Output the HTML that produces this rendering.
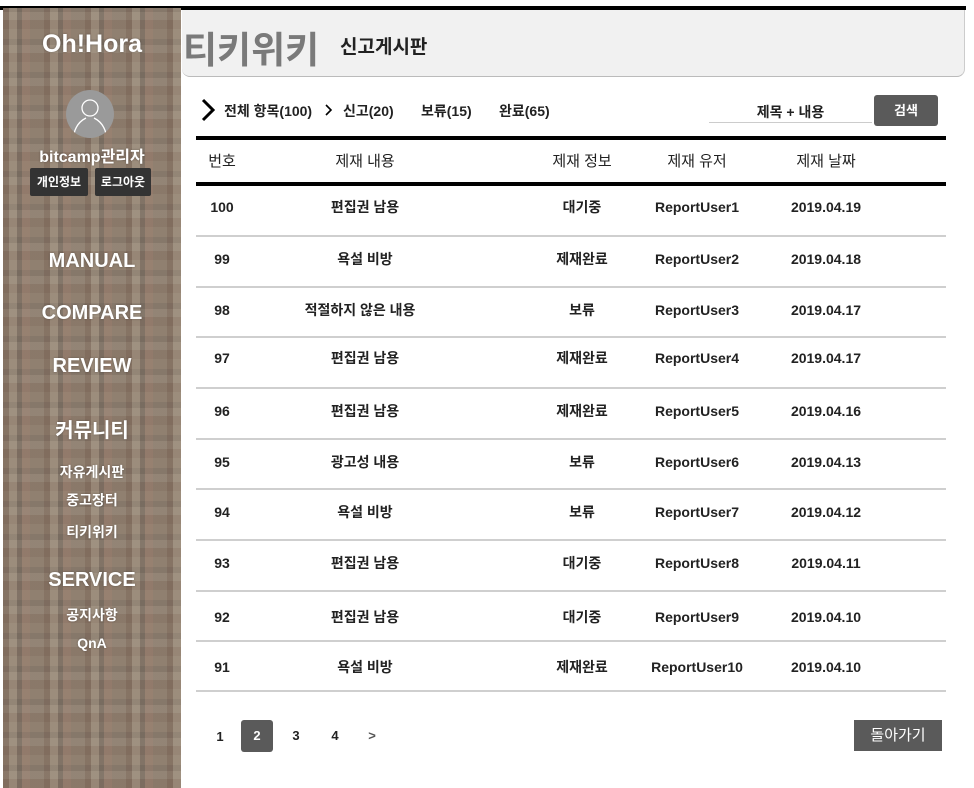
<!DOCTYPE html>
<html><head><meta charset="utf-8"><style>
*{margin:0;padding:0;box-sizing:border-box}
body{width:974px;height:788px;background:#fff;position:relative;overflow:hidden;font-family:"Liberation Sans","Noto Sans CJK KR",sans-serif;color:#222}
.a{position:absolute;white-space:nowrap}
#side{position:absolute;left:3px;top:8px;width:178px;height:780px;
background:
repeating-linear-gradient(90deg,rgba(90,60,45,.22) 0 6px,rgba(200,185,160,.18) 6px 14px,rgba(60,50,45,.2) 14px 19px,rgba(170,120,100,.18) 19px 27px,rgba(120,100,80,.1) 27px 41px),
repeating-linear-gradient(0deg,rgba(120,80,60,.12) 0 9px,rgba(210,200,180,.1) 9px 17px,rgba(70,60,55,.1) 17px 23px,rgba(180,150,120,.1) 23px 33px),
#8f8173;}
#side .t{position:absolute;width:178px;text-align:center;color:#fff;font-weight:bold;text-shadow:0 0 2px rgba(0,0,0,.3)}
.btn{position:absolute;background:#333;color:#fff;font-size:12px;font-weight:bold;text-align:center;line-height:28px;height:28px;border-radius:2px}
.r{position:absolute;font-size:14px;font-weight:bold;text-align:center;line-height:20px;color:#222}
.hl{position:absolute;left:196px;width:750px;height:2px;background:#cfcfcf}
</style></head><body>
<div class="a" style="left:0;top:6px;width:966px;height:4px;background:#000"></div>
<div id="side">
 <div class="t" style="top:22px;font-size:25px">Oh!Hora</div>
 <div style="position:absolute;left:63px;top:82px;width:48px;height:48px;border-radius:50%;background:#9a9a9a;overflow:hidden">
  <svg width="48" height="48" viewBox="0 0 48 48"><circle cx="24" cy="18" r="8" fill="none" stroke="#fff" stroke-width="1.3"/><path d="M8 44 C10 34 16 30 20 28 M40 44 C38 34 32 30 28 28" fill="none" stroke="#fff" stroke-width="1.3"/></svg>
 </div>
 <div class="t" style="top:135px;font-size:16px">bitcamp관리자</div>
 <div class="btn" style="left:27px;top:160px;width:58px">개인정보</div>
 <div class="btn" style="left:92px;top:160px;width:56px">로그아웃</div>
 <div class="t" style="top:242px;font-size:20px">MANUAL</div>
 <div class="t" style="top:294px;font-size:20px">COMPARE</div>
 <div class="t" style="top:347px;font-size:20px">REVIEW</div>
 <div class="t" style="top:406px;font-size:20px">커뮤니티</div>
 <div class="t" style="top:454px;font-size:14px">자유게시판</div>
 <div class="t" style="top:482px;font-size:14px">중고장터</div>
 <div class="t" style="top:514px;font-size:14px">티키위키</div>
 <div class="t" style="top:561px;font-size:20px">SERVICE</div>
 <div class="t" style="top:597px;font-size:14px">공지사항</div>
 <div class="t" style="top:627px;font-size:14px">QnA</div>
</div>
<div class="a" style="left:182px;top:10px;width:783px;height:67px;background:#f1f1f1;border-bottom:1px solid #bbb;border-right:1px solid #ccc;border-radius:0 0 8px 8px"></div>
<div class="a" style="left:183px;top:20px;font-size:37px;font-weight:bold;color:#7a7a7a">티키위키</div>
<div class="a" style="left:340px;top:32px;font-size:19px;font-weight:bold;color:#222">신고게시판</div>
<svg class="a" style="left:200px;top:98px" width="16" height="24" viewBox="0 0 16 24"><path d="M3 2 L13 12 L3 22" fill="none" stroke="#000" stroke-width="3"/></svg>
<div class="a" style="left:224px;top:101px;font-size:14px;font-weight:bold">전체 항목(100)</div>
<svg class="a" style="left:325px;top:104px" width="8" height="12" viewBox="0 0 8 12"><path d="M1 1 L6 6 L1 11" fill="none" stroke="#000" stroke-width="1.6"/></svg>
<div class="a" style="left:343px;top:101px;font-size:14px;font-weight:bold">신고(20)</div>
<div class="a" style="left:421px;top:101px;font-size:14px;font-weight:bold">보류(15)</div>
<div class="a" style="left:499px;top:101px;font-size:14px;font-weight:bold">완료(65)</div>
<div class="a" style="left:709px;top:102px;width:163px;text-align:center;font-size:14px;font-weight:bold">제목 + 내용</div>
<div class="a" style="left:709px;top:122px;width:163px;height:1px;background:#ccc"></div>
<div class="a" style="left:874px;top:95px;width:64px;height:31px;background:#5a5a5a;border-radius:3px;color:#fff;font-size:13px;font-weight:bold;text-align:center;line-height:31px">검색</div>
<div class="a" style="left:196px;top:136px;width:750px;height:4px;background:#000"></div>
<div class="a" style="left:196px;top:182px;width:750px;height:4px;background:#000"></div>
<div class="r" style="left:192px;width:60px;top:152px;font-weight:normal;font-size:15px">번호</div>
<div class="r" style="left:300px;width:130px;top:152px;font-weight:normal;font-size:15px">제재 내용</div>
<div class="r" style="left:532px;width:100px;top:152px;font-weight:normal;font-size:15px">제재 정보</div>
<div class="r" style="left:647px;width:100px;top:152px;font-weight:normal;font-size:15px">제재 유저</div>
<div class="r" style="left:776px;width:100px;top:152px;font-weight:normal;font-size:15px">제재 날짜</div>

<div class="hl" style="top:235px"></div><div class="hl" style="top:286px"></div><div class="hl" style="top:336px"></div><div class="hl" style="top:387px"></div><div class="hl" style="top:438px"></div><div class="hl" style="top:488px"></div><div class="hl" style="top:539px"></div><div class="hl" style="top:590px"></div><div class="hl" style="top:640px"></div><div class="hl" style="top:690px"></div>

<div class="r" style="left:192px;width:60px;top:197px">100</div><div class="r" style="left:295px;width:140px;top:197px">편집권 남용</div><div class="r" style="left:532px;width:100px;top:197px">대기중</div><div class="r" style="left:637px;width:120px;top:197px">ReportUser1</div><div class="r" style="left:766px;width:120px;top:197px">2019.04.19</div>
<div class="r" style="left:192px;width:60px;top:249px">99</div><div class="r" style="left:295px;width:140px;top:249px">욕설 비방</div><div class="r" style="left:532px;width:100px;top:249px">제재완료</div><div class="r" style="left:637px;width:120px;top:249px">ReportUser2</div><div class="r" style="left:766px;width:120px;top:249px">2019.04.18</div>
<div class="r" style="left:192px;width:60px;top:300px">98</div><div class="r" style="left:285px;width:150px;top:300px">적절하지 않은 내용</div><div class="r" style="left:532px;width:100px;top:300px">보류</div><div class="r" style="left:637px;width:120px;top:300px">ReportUser3</div><div class="r" style="left:766px;width:120px;top:300px">2019.04.17</div>
<div class="r" style="left:192px;width:60px;top:348px">97</div><div class="r" style="left:295px;width:140px;top:348px">편집권 남용</div><div class="r" style="left:532px;width:100px;top:348px">제재완료</div><div class="r" style="left:637px;width:120px;top:348px">ReportUser4</div><div class="r" style="left:766px;width:120px;top:348px">2019.04.17</div>
<div class="r" style="left:192px;width:60px;top:401px">96</div><div class="r" style="left:295px;width:140px;top:401px">편집권 남용</div><div class="r" style="left:532px;width:100px;top:401px">제재완료</div><div class="r" style="left:637px;width:120px;top:401px">ReportUser5</div><div class="r" style="left:766px;width:120px;top:401px">2019.04.16</div>
<div class="r" style="left:192px;width:60px;top:452px">95</div><div class="r" style="left:295px;width:140px;top:452px">광고성 내용</div><div class="r" style="left:532px;width:100px;top:452px">보류</div><div class="r" style="left:637px;width:120px;top:452px">ReportUser6</div><div class="r" style="left:766px;width:120px;top:452px">2019.04.13</div>
<div class="r" style="left:192px;width:60px;top:502px">94</div><div class="r" style="left:295px;width:140px;top:502px">욕설 비방</div><div class="r" style="left:532px;width:100px;top:502px">보류</div><div class="r" style="left:637px;width:120px;top:502px">ReportUser7</div><div class="r" style="left:766px;width:120px;top:502px">2019.04.12</div>
<div class="r" style="left:192px;width:60px;top:553px">93</div><div class="r" style="left:295px;width:140px;top:553px">편집권 남용</div><div class="r" style="left:532px;width:100px;top:553px">대기중</div><div class="r" style="left:637px;width:120px;top:553px">ReportUser8</div><div class="r" style="left:766px;width:120px;top:553px">2019.04.11</div>
<div class="r" style="left:192px;width:60px;top:607px">92</div><div class="r" style="left:295px;width:140px;top:607px">편집권 남용</div><div class="r" style="left:532px;width:100px;top:607px">대기중</div><div class="r" style="left:637px;width:120px;top:607px">ReportUser9</div><div class="r" style="left:766px;width:120px;top:607px">2019.04.10</div>
<div class="r" style="left:192px;width:60px;top:657px">91</div><div class="r" style="left:295px;width:140px;top:657px">욕설 비방</div><div class="r" style="left:532px;width:100px;top:657px">제재완료</div><div class="r" style="left:637px;width:120px;top:657px">ReportUser10</div><div class="r" style="left:766px;width:120px;top:657px">2019.04.10</div>

<div class="r" style="left:210px;width:20px;top:727px;font-size:13px">1</div>
<div class="a" style="left:241px;top:720px;width:32px;height:32px;background:#5a5a5a;border-radius:3px;color:#fff;font-size:13px;font-weight:bold;text-align:center;line-height:32px">2</div>
<div class="r" style="left:286px;width:20px;top:726px;font-size:13px">3</div>
<div class="r" style="left:325px;width:20px;top:726px;font-size:13px">4</div>
<div class="r" style="left:362px;width:20px;top:726px;font-size:13px;color:#555">&gt;</div>
<div class="a" style="left:854px;top:720px;width:88px;height:31px;background:#5a5a5a;color:#fff;font-size:15px;text-align:center;line-height:31px">돌아가기</div>
</body></html>
